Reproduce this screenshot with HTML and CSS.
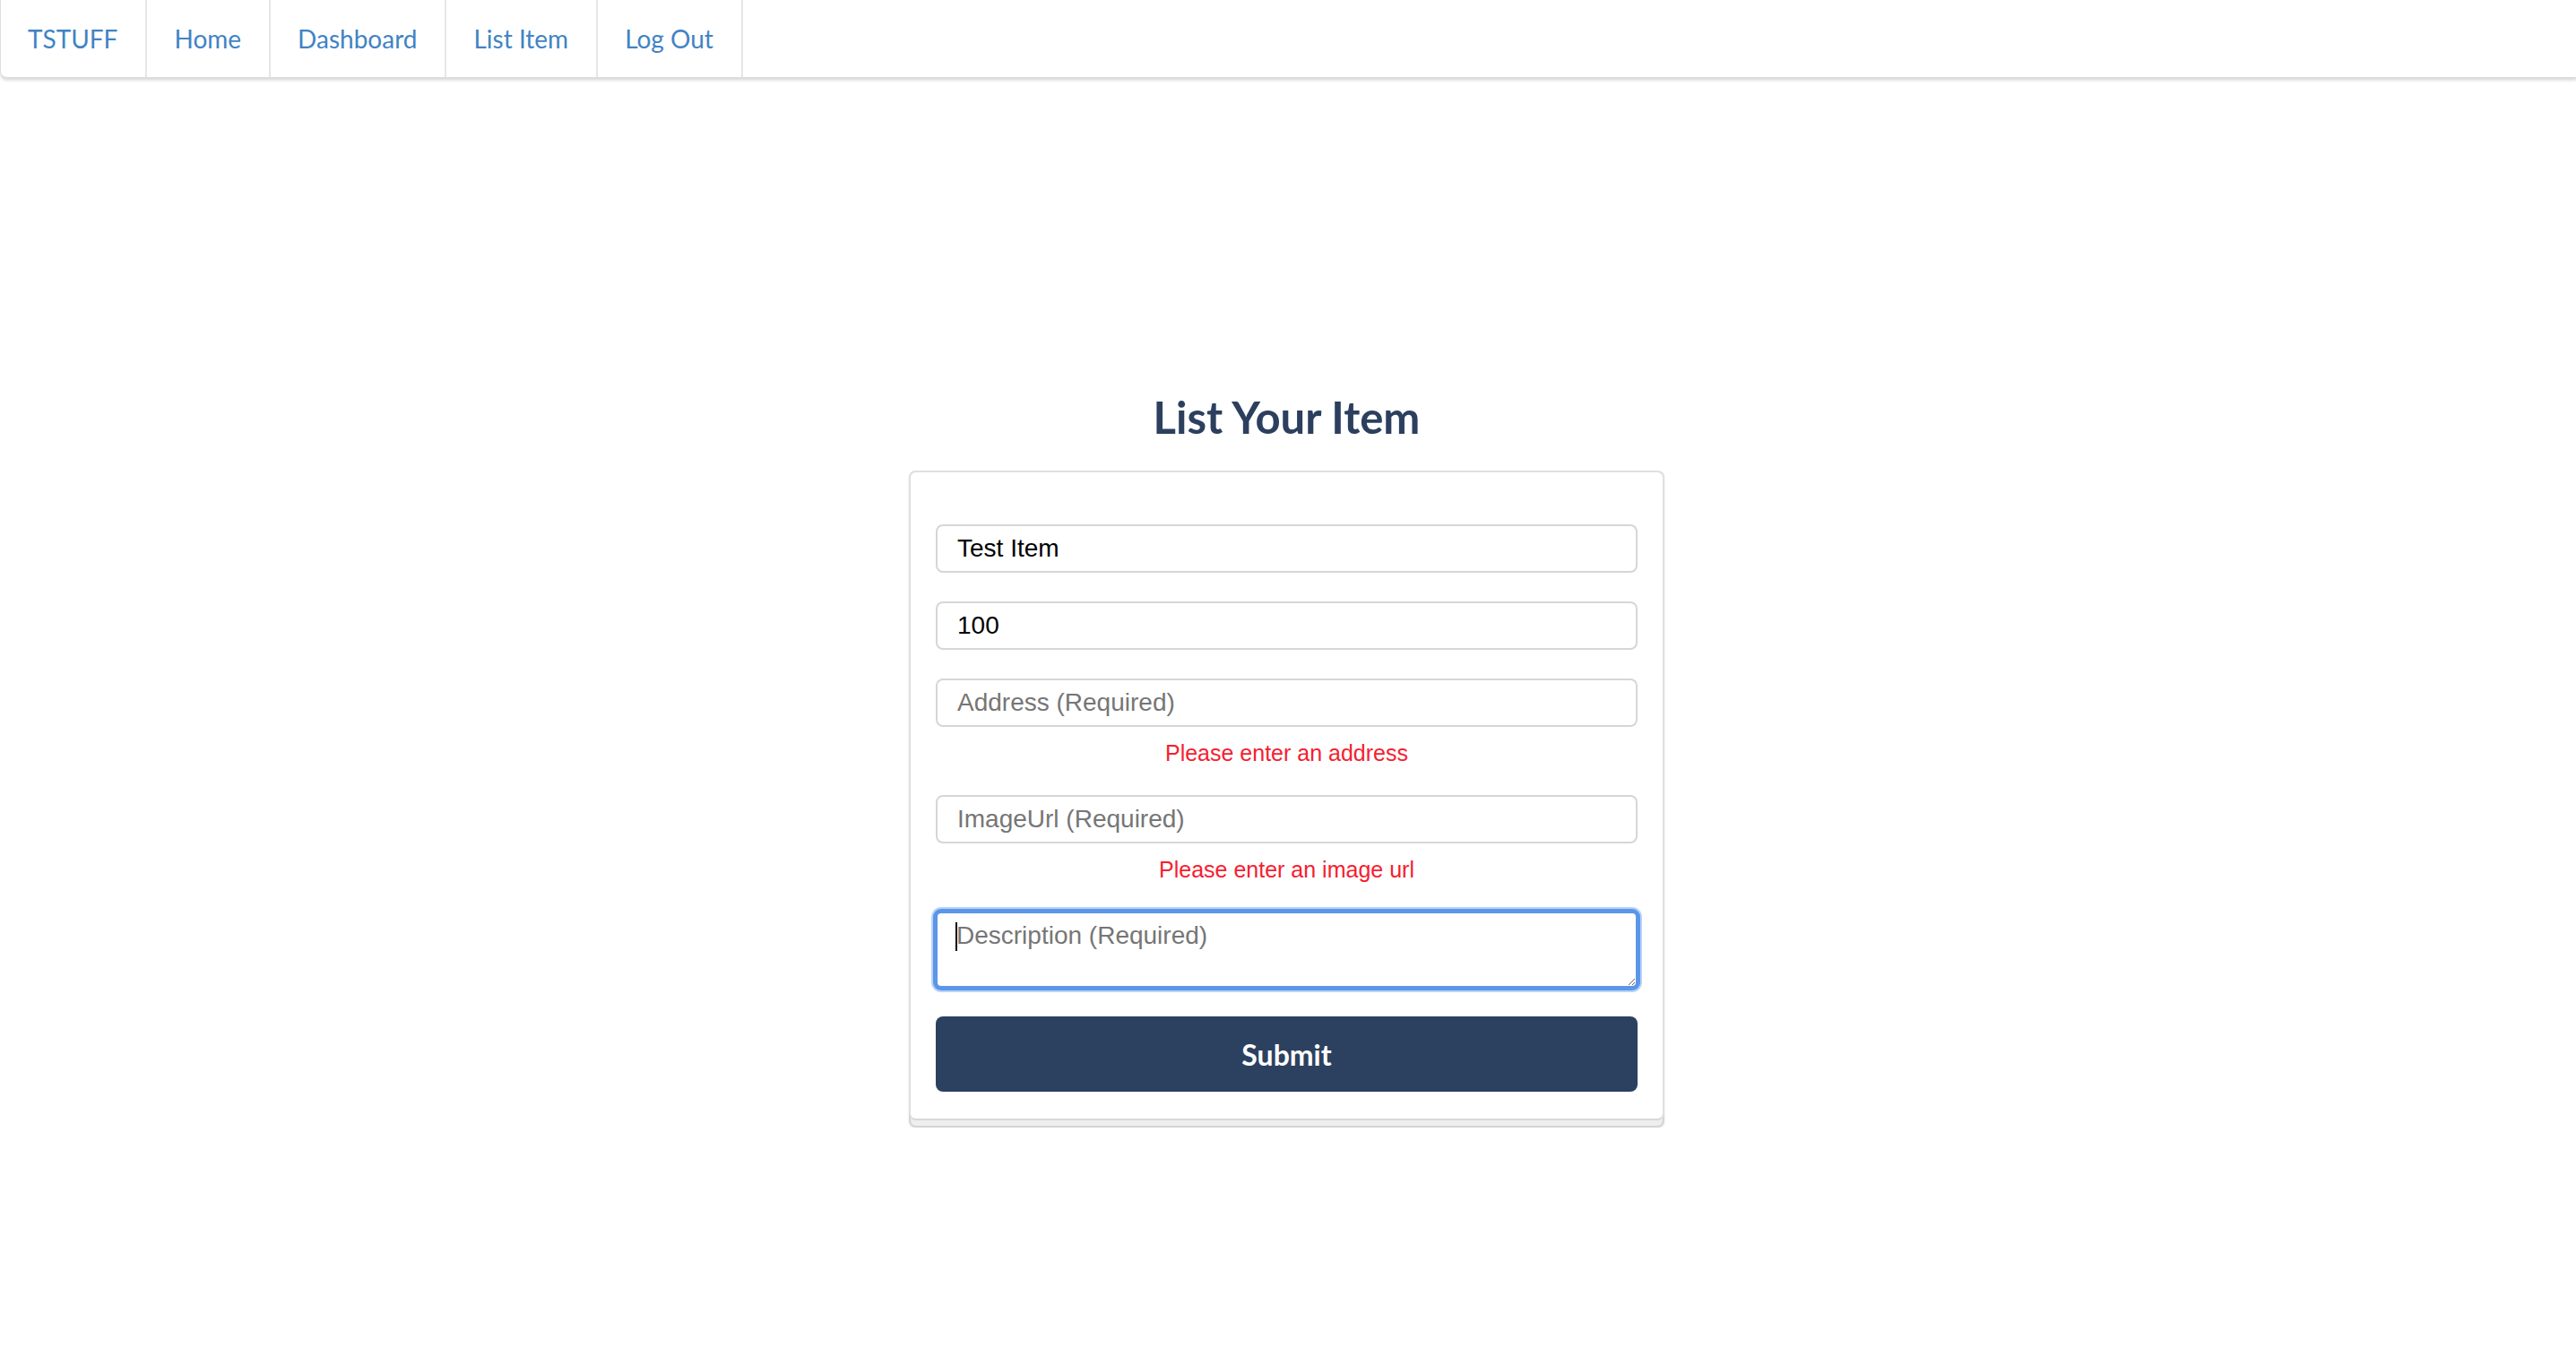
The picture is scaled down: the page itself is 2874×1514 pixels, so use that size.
FILE: index.html
```html
<!DOCTYPE html>
<html lang="en">
<head>
<meta charset="utf-8">
<title>List Your Item</title>
<link rel="stylesheet" href="styles.css">
</head>
<body>
<nav class="menu">
  <a class="item" href="#">TSTUFF</a>
  <a class="item" href="#">Home</a>
  <a class="item" href="#">Dashboard</a>
  <a class="item" href="#">List Item</a>
  <a class="item" href="#">Log Out</a>
</nav>
<main class="page">
  <div class="column">
    <h2 class="title">List Your Item</h2>
    <div class="stack">
      <form class="card">
        <div class="field">
          <input class="input" type="text" value="Test Item" placeholder="Name (Required)">
        </div>
        <div class="field">
          <input class="input" type="text" value="100" placeholder="Price (Required)">
        </div>
        <div class="field">
          <input class="input" type="text" placeholder="Address (Required)">
          <div class="error">Please enter an address</div>
        </div>
        <div class="field">
          <input class="input" type="text" placeholder="ImageUrl (Required)">
          <div class="error">Please enter an image url</div>
        </div>
        <div class="field area-wrap">
          <textarea class="textarea focused" placeholder="Description (Required)"></textarea>
          <span class="caret"></span>
        </div>
        <button class="submit" type="button">Submit</button>
      </form>
    </div>
  </div>
</main>
</body>
</html>
```

FILE: styles.css
```css
html, body {
  margin: 0;
  padding: 0;
  background: #ffffff;
}

body {
  font-family: Lato, "Helvetica Neue", Arial, sans-serif;
}

.menu {
  display: flex;
  height: 88px;
  box-sizing: border-box;
  border-left: 1px solid #dedede;
  border-bottom: 2px solid #dcdcdc;
  border-bottom-left-radius: 8px;
  box-shadow: 0 2px 3px rgba(34, 36, 38, 0.14);
  background: #ffffff;
}

.item {
  display: flex;
  align-items: center;
  padding: 0 31px 0 30px;
  font-size: 28px;
  color: #4183c4;
  text-decoration: none;
  border-right: 2px solid #e6e6e6;
}

.page {
  display: flex;
  justify-content: center;
  padding-top: 350px;
  padding-right: 3px;
}

.column {
  width: 843px;
  display: flex;
  flex-direction: column;
}

.title {
  margin: 0 0 32px 0;
  text-align: center;
  font-family: Lato, sans-serif;
  font-weight: 700;
  font-size: 49px;
  line-height: 55px;
  color: #2c3f5e;
}

.stack {
  display: flex;
  flex-direction: column;
  padding-bottom: 6px;
  border: 2px solid #d4d4d4;
  border-top: none;
  border-radius: 8px;
  background: #eeeeee;
  box-shadow: 0 2px 3px rgba(0, 0, 0, 0.08);
}

.card {
  display: flex;
  flex-direction: column;
  margin: 0 -2px;
  padding: 58px 28px 30px 28px;
  border: 2px solid #e0e0e0;
  border-bottom-color: #d8d8d8;
  border-radius: 8px;
  background: #ffffff;
}

.field {
  display: flex;
  flex-direction: column;
  margin-bottom: 32px;
}

.area-wrap {
  position: relative;
}

.input {
  box-sizing: border-box;
  height: 54px;
  padding: 0 22px;
  border: 2px solid #d6d6d6;
  border-radius: 8px;
  font-family: "Liberation Sans", Arial, Helvetica, sans-serif;
  font-size: 28px;
  color: #000000;
  background: #ffffff;
  outline: none;
}

.input::placeholder,
.textarea::placeholder {
  color: #767676;
  opacity: 1;
}

.error {
  margin: 15px 0 1px 0;
  text-align: center;
  font-family: "Liberation Sans", Arial, Helvetica, sans-serif;
  font-size: 25px;
  line-height: 28px;
  color: #f5202f;
}

.textarea {
  box-sizing: border-box;
  height: 85px;
  padding: 9px 21px;
  border: 2px solid #5b96e8;
  border-radius: 6px;
  font-family: "Liberation Sans", Arial, Helvetica, sans-serif;
  font-size: 28px;
  color: #000000;
  background: #ffffff;
  resize: vertical;
  outline: none;
}

.textarea.focused {
  box-shadow: 0 0 0 3px #5b96e8, 0 0 0 5px #b7d3fa;
}

.caret {
  position: absolute;
  left: 22px;
  top: 12px;
  width: 2px;
  height: 32px;
  background: #000000;
}

.submit {
  height: 84px;
  border: none;
  border-radius: 8px;
  background: #2c4160;
  color: #ffffff;
  font-family: Lato, sans-serif;
  font-weight: 700;
  font-size: 32px;
  cursor: pointer;
}
```
